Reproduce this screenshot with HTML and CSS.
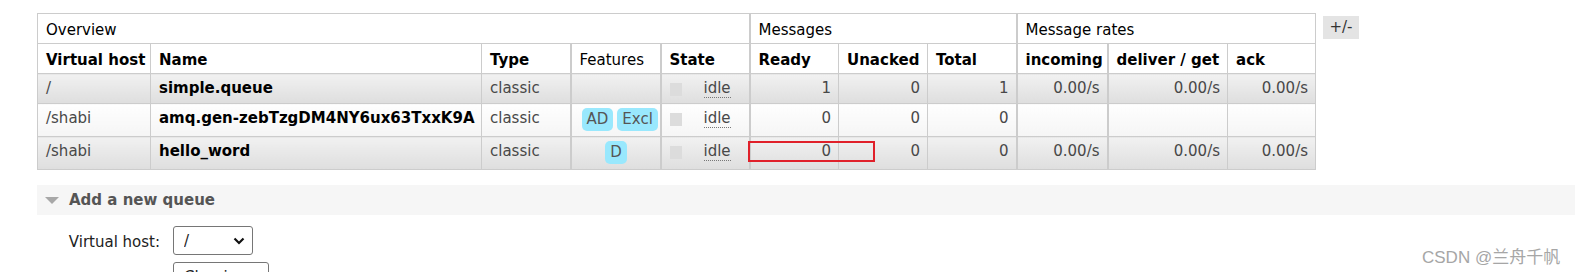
FILE: index.html
```html
<!DOCTYPE html>
<html lang="en">
<head>
    <meta charset="UTF-8">
    <title>Queues</title>
    <link rel="stylesheet" href="styles.css">
</head>
<body>
    <div class="page">
        <div class="queues">
            <div class="table-wrap">
                <table class="list">
                    <colgroup>
                        <col class="w-vhost"><col class="w-name"><col class="w-type"><col class="w-feat"><col class="w-state">
                        <col class="w-num"><col class="w-num"><col class="w-num">
                        <col class="w-in"><col class="w-deliver"><col class="w-ack">
                    </colgroup>
                    <thead>
                        <tr class="group">
                            <th colspan="5">Overview</th>
                            <th colspan="3" class="sep">Messages</th>
                            <th colspan="3" class="sep">Message rates</th>
                        </tr>
                        <tr class="cols">
                            <th>Virtual host</th>
                            <th>Name</th>
                            <th>Type</th>
                            <th class="thick plain">Features</th>
                            <th class="thick">State</th>
                            <th class="sep">Ready</th>
                            <th>Unacked</th>
                            <th>Total</th>
                            <th class="sep">incoming</th>
                            <th class="thick">deliver / get</th>
                            <th>ack</th>
                        </tr>
                    </thead>
                    <tbody>
                        <tr class="alt1">
                            <td>/</td>
                            <td class="name">simple.queue</td>
                            <td>classic</td>
                            <td class="thick c"></td>
                            <td class="thick"><span class="state"><span class="dot"></span><abbr>idle</abbr></span></td>
                            <td class="sep r">1</td>
                            <td class="r">0</td>
                            <td class="r">1</td>
                            <td class="sep r">0.00/s</td>
                            <td class="thick r">0.00/s</td>
                            <td class="r">0.00/s</td>
                        </tr>
                        <tr class="alt2">
                            <td>/shabi</td>
                            <td class="name">amq.gen-zebTzgDM4NY6ux63TxxK9A</td>
                            <td>classic</td>
                            <td class="thick c"><span class="badge">AD</span><span class="badge">Excl</span></td>
                            <td class="thick"><span class="state"><span class="dot"></span><abbr>idle</abbr></span></td>
                            <td class="sep r">0</td>
                            <td class="r">0</td>
                            <td class="r">0</td>
                            <td class="sep r"></td>
                            <td class="thick r"></td>
                            <td class="r"></td>
                        </tr>
                        <tr class="alt1">
                            <td>/shabi</td>
                            <td class="name">hello_word</td>
                            <td>classic</td>
                            <td class="thick c"><span class="badge">D</span></td>
                            <td class="thick"><span class="state"><span class="dot"></span><abbr>idle</abbr></span></td>
                            <td class="sep r">0</td>
                            <td class="r">0</td>
                            <td class="r">0</td>
                            <td class="sep r">0.00/s</td>
                            <td class="thick r">0.00/s</td>
                            <td class="r">0.00/s</td>
                        </tr>
                    </tbody>
                </table>
                <!-- annotation box drawn over the Ready cell -->
                <div class="mark"></div>
            </div>
            <span class="plus-minus">+/-</span>
        </div>

        <div class="section-head">
            <span class="arrow"></span>
            <h2>Add a new queue</h2>
        </div>

        <div class="form">
            <label>Virtual host:</label>
            <div class="select small">
                <select><option>/</option><option>/shabi</option></select>
                <svg width="12" height="8" viewBox="0 0 12 8"><path d="M1.5 1.5 L6 6 L10.5 1.5" fill="none" stroke="#111" stroke-width="2.2"/></svg>
            </div>
            <label></label>
            <div class="select wide">
                <select><option>Classic</option><option>Quorum</option></select>
            </div>
        </div>
    </div>

    <div class="watermark">CSDN @兰舟千帆</div>
</body>
</html>
```

FILE: styles.css
```css
body {
    margin: 0;
    font-family: 'DejaVu Sans', Verdana, sans-serif;
    font-size: 15px;
    color: #484848;
    background-color: #fff;
    overflow: hidden;
}
.page {
    padding: 13px 0 0 37px;
}
.queues {
    display: flex;
    align-items: flex-start;
    gap: 7px;
}
.table-wrap {
    position: relative;
}
table.list {
    table-layout: fixed;
    width: 1278px;
    border-collapse: collapse;
    border: 1px solid #ccc;
}
.w-vhost { width: 113px; }
.w-name { width: 331px; }
.w-type { width: 89px; }
.w-feat { width: 90px; }
.w-state { width: 89px; }
.w-num { width: 89px; }
.w-in { width: 91px; }
.w-deliver { width: 120px; }
.w-ack { width: 88px; }

table.list th, table.list td {
    border: 1px solid #ccc;
    padding: 5px 7px 5px 8px;
    line-height: 19px;
    text-align: left;
    vertical-align: top;
    white-space: nowrap;
    overflow: hidden;
}
table.list th {
    color: #000;
    background-color: #fff;
    font-weight: bold;
    padding-top: 7px;
    padding-bottom: 3px;
}
table.list tr.group th, table.list th.plain {
    font-weight: normal;
}
table.list .thick {
    border-left: 2px solid #ccc;
}
table.list .sep {
    border-left: 2px solid #ccc;
}
table.list tr.alt1 td {
    background: linear-gradient(#f1f1f1, #dedede);
}
table.list tr.alt2 td {
    background: linear-gradient(#fefefe, #f5f5f5);
}
table.list td.name {
    font-weight: bold;
    color: #000;
}
table.list td.r {
    text-align: right;
}
table.list td.c {
    text-align: center;
}
.badge {
    display: inline-block;
    padding: 2px 5px;
    margin: -1px 2px 0;
    line-height: 19px;
    border-radius: 5px;
    background-color: #99e8fd;
    color: #555;
}
.state {
    display: flex;
    align-items: center;
    padding-top: 1px;
}
.dot {
    width: 12px;
    height: 13px;
    background-color: #dcdcdc;
    margin-right: 22px;
}
.state abbr {
    text-decoration: none;
    line-height: 17px;
    border-bottom: 1px dotted #777;
}
.mark {
    position: absolute;
    left: 711px;
    top: 128px;
    width: 123px;
    height: 17px;
    border: 2px solid #e0202a;
}
.plus-minus {
    margin-top: 3px;
    width: 36px;
    height: 23px;
    line-height: 23px;
    text-align: center;
    background-color: #e4e4e4;
    color: #333;
}
.section-head {
    display: flex;
    align-items: center;
    margin-top: 15px;
    height: 30px;
    padding-left: 8px;
    background-color: #f6f6f6;
}
.arrow {
    width: 0;
    height: 0;
    border-left: 7px solid transparent;
    border-right: 7px solid transparent;
    border-top: 7px solid #a8a8a8;
    margin-right: 10px;
}
.section-head h2 {
    margin: 0;
    font-size: 15px;
    font-weight: bold;
    color: #555;
}
.form {
    display: grid;
    grid-template-columns: 123px auto;
    column-gap: 13px;
    row-gap: 7px;
    margin-top: 11px;
    justify-items: start;
    align-items: center;
}
.form label {
    justify-self: end;
    color: #222;
    padding-top: 3px;
}
.select {
    position: relative;
}
.select select {
    appearance: none;
    -webkit-appearance: none;
    font-family: 'DejaVu Sans', Verdana, sans-serif;
    font-size: 15px;
    color: #222;
    background-color: #fff;
    border: 1px solid #767676;
    border-radius: 3px;
    height: 29px;
    padding: 0 10px;
    margin: 0;
}
.select.small select {
    width: 80px;
}
.select.wide select {
    width: 96px;
    height: 29px;
}
.select svg {
    position: absolute;
    right: 8px;
    top: 11px;
    pointer-events: none;
}
.watermark {
    position: absolute;
    left: 1422px;
    top: 243px;
    font-family: 'Liberation Sans', 'Noto Sans CJK SC', sans-serif;
    font-size: 17px;
    color: #a6a6a6;
}
```
